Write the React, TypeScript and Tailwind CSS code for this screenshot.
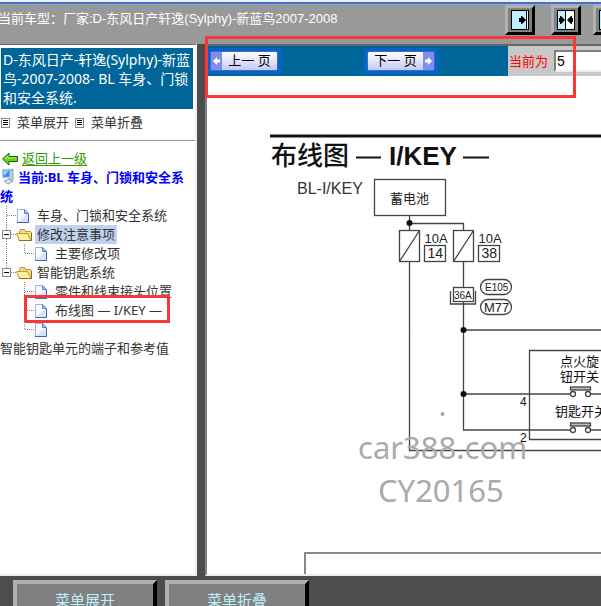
import type { ReactNode } from "react";

type Row = {
  label: string;
  kind: "file" | "folder";
  level: 0 | 1;
  last?: boolean;
  guide?: boolean;
  selected?: boolean;
  marked?: boolean;
};

const rows: Row[] = [
  { label: "车身、门锁和安全系统", kind: "file", level: 0 },
  { label: "修改注意事项", kind: "folder", level: 0, selected: true },
  { label: "主要修改项", kind: "file", level: 1, last: true, guide: true },
  { label: "智能钥匙系统", kind: "folder", level: 0, last: true },
  { label: "零件和线束接头位置", kind: "file", level: 1 },
  { label: "布线图 — I/KEY —", kind: "file", level: 1, marked: true },
  { label: "", kind: "file", level: 1, last: true },
];

function FileIcon() {
  return (
    <svg width="17" height="16" viewBox="0 0 17 16" className="shrink-0">
      <path d="M1.5 1.5h7l4 4v9h-11z" fill="#fafcff" stroke="#9db4dd" />
      <path d="M2 14l10-9v9z" fill="#d6e4fa" />
      <path d="M8.5 1.5v4h4z" fill="#a9c4f0" stroke="#5f82c4" />
      <path d="M1 14.5h11.500V6" fill="none" stroke="#44659f" />
    </svg>
  );
}

function FolderIcon() {
  return (
    <svg width="17" height="16" viewBox="0 0 17 16" className="shrink-0">
      <path d="M3.500 13.500V4.500l1-2h4l1 2h5l1 1v8z" fill="#f6dc80" stroke="#b39239" />
      <path d="M3.500 13.500L.5 6.500h11l3.500 7z" fill="#fff09c" stroke="#c09c38" />
      <path d="M3 13.500h12.500V6" fill="none" stroke="#8c6d22" />
    </svg>
  );
}

function Connector({ row }: { row: Row }) {
  return (
    <svg width="16" height="19" viewBox="0 0 16 19" className="shrink-0" stroke="#888" fill="none">
      <path d={row.last ? "M6.500 0V10" : "M6.500 0V19"} strokeDasharray="1 1" />
      <path d="M7 9.500H16" strokeDasharray="1 1" />
      {row.kind === "folder" && (
        <>
          <rect x="2.500" y="5.500" width="8" height="8" fill="#fff" stroke="#888" />
          <path d="M4 9.500h5" stroke="#000" />
        </>
      )}
    </svg>
  );
}

function TreeRow({ row }: { row: Row }) {
  return (
    <li className="relative flex h-[19px] items-center whitespace-nowrap">
      {row.level === 1 && (
        <svg width="18" height="19" className="shrink-0">
          {row.guide && <path d="M6.500 0V19" stroke="#888" strokeDasharray="1 1" />}
        </svg>
      )}
      <Connector row={row} />
      {row.kind === "file" ? <FileIcon /> : <FolderIcon />}
      <a href="#" className={row.selected ? "ml-0.5 bg-[#c1d2ee] px-0.5" : "ml-1"}>
        {row.label}
      </a>
      {row.marked && (
        <span className="pointer-events-none absolute -top-1.5 left-6 h-7 w-[146px] border-3 border-[#f83838]" />
      )}
    </li>
  );
}

function ListIcon() {
  return (
    <svg width="9" height="10" viewBox="0 0 9 10" className="shrink-0" fill="none">
      <rect x=".5" y=".5" width="8" height="9" stroke="#888" />
      <path d="M2 2.500h5M2 4.500h5M2 6.500h5" stroke="#000" />
    </svg>
  );
}

function Sidebar() {
  return (
    <nav className="w-[197px] shrink-0 overflow-hidden border-t border-r-2 border-b-2 border-t-[#666] border-r-[#f0f0f0] border-b-[#f0f0f0] bg-white text-[13px] leading-[19px] text-[#333]">
      <h1 className="mt-[3px] mr-0.5 ml-px bg-[#006699] py-0.5 pl-0.5 text-[14px] leading-[19px] text-white">
        D-东风日产-轩逸(Sylphy)-新蓝鸟-2007-2008- BL 车身、门锁和安全系统.
      </h1>
      <div className="flex h-8 items-center border-b border-[#999] pl-px pb-1">
        <button type="button" className="flex items-center gap-[7px]">
          <ListIcon />
          菜单展开
        </button>
        <button type="button" className="ml-1.5 flex items-center gap-[7px]">
          <ListIcon />
          菜单折叠
        </button>
      </div>
      <div className="mt-2 flex items-center gap-1 pl-0.5">
        <svg width="16" height="14" viewBox="0 0 16 14">
          <path d="M.5 7L7 1v3.500h8.500v5H7V13z" fill="#6bd020" stroke="#176a00" />
          <path d="M3 7l3-3v2h8" fill="none" stroke="#b8f070" />
        </svg>
        <a href="#" className="text-[#339900] underline underline-offset-2">返回上一级</a>
      </div>
      <p className="font-bold text-[#0000ff]">
        <svg width="16" height="17" viewBox="0 0 16 17" className="mr-0.5 inline-block align-[-3px]">
          <path d="M10 2l3-1v11l-4 1z" fill="#c3cfe0" stroke="#8b9dba" />
          <path d="M2 2l8-1v8l-7 1z" fill="#3f8fe8" stroke="#b4cbe8" />
          <path d="M3 3l6-1-5 6z" fill="#9cd6ff" />
          <path d="M4 13l5-2 4 2-5 3z" fill="#dce4ee" stroke="#899cb8" />
        </svg>
        当前:BL 车身、门锁和安全系统
      </p>
      <ul>
        {rows.map((row, i) => (
          <TreeRow key={i} row={row} />
        ))}
      </ul>
      <a href="#" className="whitespace-nowrap">智能钥匙单元的端子和参考值</a>
    </nav>
  );
}

function PaneButton({ label, children }: { label: string; children: ReactNode }) {
  return (
    <button
      type="button"
      aria-label={label}
      className="flex h-[30px] w-[30px] shrink-0 items-center justify-center border-3 border-t-[#b0b0b0] border-r-black border-b-black border-l-[#b0b0b0] bg-[#808080]"
    >
      <svg width="18" height="20" viewBox="0 0 18 20" className="shrink-0">
        {children}
      </svg>
    </button>
  );
}

function Header() {
  return (
    <header className="flex h-[39px] shrink-0 justify-between overflow-hidden bg-[#999]">
      <p className="mt-1.5 -ml-0.5 font-['Liberation_Sans','Noto_Sans_CJK_SC',sans-serif] text-[13px] leading-4 whitespace-nowrap text-white">
        当前车型：厂家:D-东风日产轩逸(Sylphy)-新蓝鸟2007-2008
      </p>
      <div className="-mr-[22px] flex shrink-0">
        <PaneButton label="展开左侧">
          <rect x=".5" y=".5" width="17" height="19" fill="#bfefff" stroke="#000" />
          <path d="M15 1h2v18h-2z" fill="#fff" />
          <path d="M15.500 1v18" stroke="#000" />
          <path d="M8 8h2V6h1l4 4-4 4h-1v-2H8z" />
        </PaneButton>
        <div className="w-4" />
        <PaneButton label="左右分栏">
          <rect x=".5" y=".5" width="17" height="19" fill="#bfefff" stroke="#000" />
          <path d="M9 1h8v18H9z" fill="#fff" />
          <path d="M8.500 1v18" stroke="#000" />
          <path d="M2 8h1V6h1l4 4-4 4H3v-2H2zM16 8h-1V6h-1l-4 4 4 4h1v-2h1z" />
        </PaneButton>
        <div className="w-3" />
        <PaneButton label="展开右侧">
          <rect x=".5" y=".5" width="17" height="19" fill="#fff" stroke="#000" />
          <path d="M1 1h2v18H1z" fill="#bfefff" />
          <path d="M3.500 1v18" stroke="#000" />
          <path d="M11 8H9V6H8l-4 4 4 4h1v-2h2z" />
        </PaneButton>
      </div>
    </header>
  );
}

function Arrow({ next }: { next?: boolean }) {
  return (
    <span className="flex h-full w-[11px] items-center justify-center bg-[#7d8df0]">
      <svg width="9" height="10" viewBox="0 0 9 10" fill="#fff">
        {next ? <path d="M1 3.500h3V1l4 4-4 4V6.500H1z" /> : <path d="M8 3.500H5V1L1 5l4 4V6.500h3z" />}
      </svg>
    </span>
  );
}

function Toolbar() {
  const navButton =
    "flex h-5 w-[68px] items-center overflow-hidden rounded-xs border border-[#5262b8] bg-linear-to-b from-white to-[#c3c9f5] text-[13px] text-black";
  return (
    <div className="flex h-[30px] shrink-0 bg-[#006699] font-['Liberation_Sans','Noto_Sans_CJK_SC',sans-serif]">
      <div className="flex w-[301px] shrink-0 items-center justify-between pr-[70px] pl-px">
        <span className="bg-[#0066cc] py-[3px] pr-1 pl-0.5">
          <button type="button" className={navButton}>
            <Arrow />
            <span className="flex-1">上一 页</span>
          </button>
        </span>
        <span className="bg-[#0066cc] px-[3px] py-[3px]">
          <button type="button" className={navButton}>
            <span className="flex-1">下一 页</span>
            <Arrow next />
          </button>
        </span>
      </div>
      <div className="flex flex-1 items-center overflow-hidden bg-[#c8c8c8]">
        <label htmlFor="page" className="ml-px w-[45px] shrink-0 pt-0.5 text-[13px] text-[#ff0000]">
          当前为
        </label>
        <input
          id="page"
          defaultValue="5"
          className="h-[22px] w-40 shrink-0 border-2 border-t-[#808080] border-r-[#eee] border-b-[#eee] border-l-[#808080] bg-white px-px text-[14px] text-black"
        />
      </div>
    </div>
  );
}

function Fuse({ x, rating, no }: { x: number; rating: string; no: string }) {
  return (
    <g>
      <rect x={x} y="230.500" width="20" height="31" fill="#fff" />
      <path d={`M${x} 261.500l20-31`} />
      <rect x={x + 25} y="245.500" width="21" height="16" fill="#fff" />
      <g stroke="none" fill="#222" fontSize="13">
        <text x={x + 25} y="243">{rating}</text>
        <text x={x + 28} y="258" fontSize="14">{no}</text>
      </g>
    </g>
  );
}

function Contact({ y }: { y: number }) {
  return (
    <g>
      <path d={`M463 ${y}h107M591 ${y}H1600`} />
      <circle cx="573" cy={y} r="2.500" fill="#fff" />
      <circle cx="588" cy={y} r="2.500" fill="#fff" />
      <rect x="570.500" y={y - 7} width="20" height="3" fill="#bbb" />
    </g>
  );
}

function WiringDiagram() {
  return (
    <svg
      width="394"
      height="498"
      viewBox="207 76 394 498"
      role="img"
      aria-label="布线图 — I/KEY —"
      className="block overflow-visible font-['Liberation_Sans','Noto_Sans_CJK_SC',sans-serif]"
      fill="none"
      stroke="#444"
      strokeWidth="1.3"
    >
      <path d="M270 136H1600" stroke="#111" strokeWidth="3" />
      <g stroke="none" fill="#111" fontSize="26">
        <text x="271" y="165" fontWeight="500">布线图</text>
        <text x="389" y="165" fontWeight="700">I/KEY</text>
      </g>
      <path d="M356 157.500h25M463 157.500h26" stroke="#111" strokeWidth="2" />
      <text x="297" y="194" fontSize="16" stroke="none" fill="#333">BL-I/KEY</text>
      <rect x="374.500" y="179.500" width="71" height="36" />
      <text x="390" y="203" fontSize="13" stroke="none" fill="#222">蓄电池</text>

      <path d="M409.500 216V450.500H1600M409.500 223.500h54V430M463.500 330H1600" />
      <Fuse x={399.5} rating="10A" no="14" />
      <Fuse x={453.5} rating="10A" no="38" />
      <path d="M450.500 291v13h25v-13" />
      <rect x="453.500" y="287.500" width="20" height="14" fill="#fff" />
      <rect x="480.500" y="279.500" width="31" height="15" rx="7.500" />
      <rect x="480.500" y="299.500" width="31" height="15" rx="7.500" />
      <g stroke="none" fill="#222">
        <text x="454" y="299" fontSize="10">36A</text>
        <text x="485" y="291" fontSize="10">E105</text>
        <text x="484" y="312" fontSize="13">M77</text>
      </g>
      <path d="M1600 350.500H529.500V439.500H1600" />
      <Contact y={394} />
      <Contact y={430} />
      <g stroke="none" fill="#111">
        <circle cx="409.500" cy="223" r="3" />
        <circle cx="463.500" cy="330" r="3" />
        <circle cx="463.500" cy="394" r="3" />
        <text x="560" y="366" fontSize="13">点火旋</text>
        <text x="560" y="381" fontSize="13">钮开关</text>
        <text x="555" y="416" fontSize="13">钥匙开关</text>
        <text x="520" y="406" fontSize="12">4</text>
        <text x="520" y="442" fontSize="12">2</text>
      </g>
      <path d="M305 574V553H1600" stroke="#888" strokeWidth="2" />

      <g stroke="none" fill="#aaa" className="font-['Noto_Sans',sans-serif]">
        <circle cx="442.500" cy="414" r="2" />
        <text x="358" y="459" fontSize="31">car388.com</text>
        <text x="378" y="502" fontSize="31">CY20165</text>
      </g>
    </svg>
  );
}

function FooterButton({ children }: { children: string }) {
  return (
    <button
      type="button"
      className="h-10 w-36 shrink-0 border-4 border-t-[#b0b0b0] border-r-black border-b-black border-l-[#b0b0b0] bg-[#808080] text-[15px] text-[#bfefff]"
    >
      {children}
    </button>
  );
}

export default function App() {
  return (
    <div className="flex h-screen flex-col overflow-hidden bg-[#4d4d4d] font-['Noto_Sans','Noto_Sans_CJK_SC',sans-serif]">
      <div className="h-[5px] shrink-0 border-t-2 border-b border-t-[#eef2fc] border-b-[#8fa5dc] bg-[#4a6fc8]" />
      <Header />
      <div className="relative flex min-h-0 flex-1">
        <Sidebar />
        <main className="ml-2 flex min-w-0 flex-1 flex-col overflow-hidden border-t-2 border-b-2 border-l-2 border-t-[#666] border-b-[#eee] border-l-[#808080] bg-white">
          <Toolbar />
          <div className="min-h-0 flex-1 overflow-hidden">
            <WiringDiagram />
          </div>
        </main>
        <div className="pointer-events-none absolute -top-2 left-[205px] h-[62px] w-[371px] border-3 border-[#f83838]" />
      </div>
      <footer className="flex h-[30px] shrink-0 gap-2 overflow-hidden pt-1 pl-[13px]">
        <FooterButton>菜单展开</FooterButton>
        <FooterButton>菜单折叠</FooterButton>
      </footer>
    </div>
  );
}
